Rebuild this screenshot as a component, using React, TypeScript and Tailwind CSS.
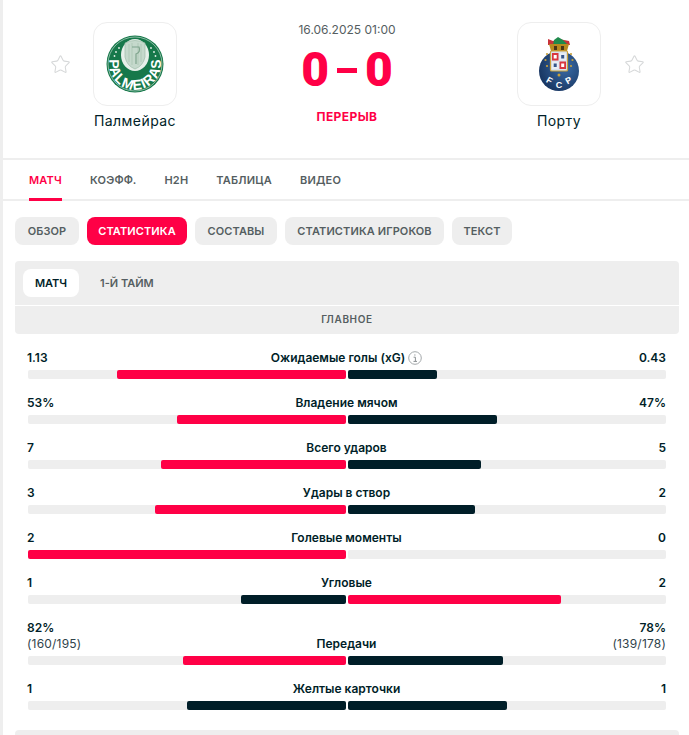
import { Star } from "lucide-react";
import type { ReactNode } from "react";

const TABS = ["МАТЧ", "КОЭФФ.", "H2H", "ТАБЛИЦА", "ВИДЕО"];
const PILLS = [
  { label: "ОБЗОР", width: "w-[64px]" },
  { label: "СТАТИСТИКА", width: "w-[100px]" },
  { label: "СОСТАВЫ", width: "w-[82px]" },
  { label: "СТАТИСТИКА ИГРОКОВ", width: "w-[159px]" },
  { label: "ТЕКСТ", width: "w-[60px]" },
];

interface StatRow {
  label: string;
  home: string;
  away: string;
  homeSub?: string;
  awaySub?: string;
  homePct: number;
  awayPct: number;
  leader: "home" | "away" | "none";
  info?: boolean;
}

const STATS: StatRow[] = [
  { label: "Ожидаемые голы (xG)", home: "1.13", away: "0.43", homePct: 72, awayPct: 28, leader: "home", info: true },
  { label: "Владение мячом", home: "53%", away: "47%", homePct: 53, awayPct: 47, leader: "home" },
  { label: "Всего ударов", home: "7", away: "5", homePct: 58.2, awayPct: 41.8, leader: "home" },
  { label: "Удары в створ", home: "3", away: "2", homePct: 60, awayPct: 40, leader: "home" },
  { label: "Голевые моменты", home: "2", away: "0", homePct: 100, awayPct: 0, leader: "home" },
  { label: "Угловые", home: "1", away: "2", homePct: 33, awayPct: 67, leader: "away" },
  { label: "Передачи", home: "82%", away: "78%", homeSub: "(160/195)", awaySub: "(139/178)", homePct: 51.3, awayPct: 48.7, leader: "home" },
  { label: "Желтые карточки", home: "1", away: "1", homePct: 50, awayPct: 50, leader: "none" },
];

function PalmeirasLogo() {
  return (
    <svg viewBox="0 0 58 58" className="size-[58px]">
      <circle cx="29" cy="29" r="28.5" fill="#16784a" />
      <circle cx="29" cy="29" r="27" fill="none" stroke="#d9e8df" strokeWidth="0.6" />
      {/* shield */}
      <ellipse cx="29" cy="20" rx="14" ry="16" fill="#e6efe9" />
      <path d="M19 8 Q29 3 39 8 L39 22 Q37 31 29 34 Q21 31 19 22 Z" fill="#c5d9cc" stroke="#9dbba9" strokeWidth="0.7" />
      <path d="M23 9 V27 M26 8 V30 M32 8 V30 M35 9 V27" stroke="#a9c5b3" strokeWidth="0.8" />
      <path d="M26 12 H33 Q35 17 30 19 V29" fill="none" stroke="#7fa48d" strokeWidth="1.2" />
      <g fill="#e6efe9">
        <circle cx="10" cy="17" r="0.9" />
        <circle cx="48" cy="17" r="0.9" />
        <circle cx="13" cy="13" r="0.9" />
        <circle cx="45" cy="13" r="0.9" />
        <circle cx="8.5" cy="21" r="0.9" />
        <circle cx="49.5" cy="21" r="0.9" />
      </g>
      <path id="palm-arc" d="M3.5 25 A25.8 25.8 0 1 0 54.5 25" fill="none" />
      <text fontFamily="'Liberation Sans', sans-serif" fontWeight="700" fontSize="14" fill="#fff">
        <textPath href="#palm-arc" startOffset="50%" textAnchor="middle" textLength="90">
          PALMEIRAS
        </textPath>
      </text>
    </svg>
  );
}

function PortoLogo() {
  return (
    <svg viewBox="0 0 40 54" className="h-[54px] w-[40px]">
      <defs>
        <radialGradient id="porto-ball" cx="65%" cy="40%" r="70%">
          <stop offset="0%" stopColor="#3a6ba6" />
          <stop offset="100%" stopColor="#17345f" />
        </radialGradient>
      </defs>
      <circle cx="20" cy="34" r="20" fill="url(#porto-ball)" />
      {/* crown */}
      <path d="M9 2 L14 4 L20 2 L25 3 L30 4 L31 8 L9 8 Z" fill="#c8323a" />
      <path d="M15 3 L19 0 L24 3 L28 7 L22 9 L14 8 Z" fill="#1f8a4c" />
      <path d="M10 7 H30 L28 14 H12 Z" fill="#b8891f" />
      <rect x="15" y="9" width="3" height="4" fill="#4a3515" />
      <rect x="22" y="9" width="3" height="4" fill="#4a3515" />
      {/* shield */}
      <rect x="11.5" y="14" width="17" height="20" rx="1" fill="#d9e3ee" stroke="#c9a13b" strokeWidth="1.2" />
      <rect x="13" y="16" width="6.5" height="7.5" fill="#d9363e" />
      <rect x="20.5" y="16" width="6.5" height="7.5" fill="#e7eef5" />
      <rect x="13" y="24.5" width="6.5" height="7.5" fill="#e7eef5" />
      <rect x="20.5" y="24.5" width="6.5" height="7.5" fill="#d9363e" />
      <rect x="14.7" y="18" width="3" height="3.5" fill="#fff" />
      <rect x="22.2" y="18" width="3" height="3.5" fill="#35568a" />
      <rect x="14.7" y="26.5" width="3" height="3.5" fill="#35568a" />
      <rect x="22.2" y="26.5" width="3" height="3.5" fill="#fff" />
      <g fill="#c9a13b">
        <circle cx="8" cy="17" r="1.1" />
        <circle cx="32" cy="17" r="1.1" />
        <circle cx="6.5" cy="23" r="1.1" />
        <circle cx="33.5" cy="23" r="1.1" />
        <circle cx="8" cy="29" r="1.1" />
        <circle cx="32" cy="29" r="1.1" />
        <circle cx="20" cy="38" r="1.5" />
      </g>
      <g fontFamily="'Liberation Sans', sans-serif" fontWeight="700" fontSize="9" fill="#fff" textAnchor="middle">
        <text x="9" y="46" transform="rotate(30 9 46)">F</text>
        <text x="20" y="51">C</text>
        <text x="31" y="46" transform="rotate(-30 31 46)">P</text>
      </g>
    </svg>
  );
}

function Team({ name, children }: { name: string; children: ReactNode }) {
  return (
    <div className="flex w-[84px] flex-col items-center">
      <div className="flex size-[84px] items-center justify-center rounded-[14px] border border-[#eeeeee] bg-white">
        {children}
      </div>
      <span className="mt-[5px] whitespace-nowrap text-[14px] leading-[20px] tracking-[0.45px] text-[#001e28]">
        {name}
      </span>
    </div>
  );
}

function InfoIcon() {
  return (
    <svg viewBox="0 0 14 14" className="size-[14px]">
      <circle cx="7" cy="7" r="6.3" fill="none" stroke="#a4a9ab" strokeWidth="1" />
      <path d="M5.6 6.2 H7.4 V10.3 M5.5 10.4 H9 M6.9 3.4 V4.6" fill="none" stroke="#8b9193" strokeWidth="1" />
    </svg>
  );
}

function Stat({ stat }: { stat: StatRow }) {
  return (
    <div className="mb-[16px] last:mb-0">
      <div className="flex items-end justify-between text-[12px] leading-[16px] text-[#001e28]">
        <div className="-ml-px w-[100px]">
          <div className="font-semibold">{stat.home}</div>
          {stat.homeSub && <div className="tracking-[0.2px] text-[#30434b]">{stat.homeSub}</div>}
        </div>
        <div className="flex items-center gap-[3px] font-semibold">
          {stat.label}
          {stat.info && <InfoIcon />}
        </div>
        <div className="w-[100px] text-right">
          <div className="font-semibold">{stat.away}</div>
          {stat.awaySub && <div className="tracking-[0.2px] text-[#30434b]">{stat.awaySub}</div>}
        </div>
      </div>
      <div className="mt-[4px] flex gap-[2px]">
        <div className="flex h-[9px] flex-1 justify-end rounded-[2px] bg-[#eeeeee]">
          <div
            className={`rounded-[2px] ${stat.leader === "home" ? "bg-[#ff0046]" : "bg-[#001e28]"}`}
            style={{ width: `${stat.homePct}%` }}
          />
        </div>
        <div className="flex h-[9px] flex-1 rounded-[2px] bg-[#eeeeee]">
          <div
            className={`rounded-[2px] ${stat.leader === "away" ? "bg-[#ff0046]" : "bg-[#001e28]"}`}
            style={{ width: `${stat.awayPct}%` }}
          />
        </div>
      </div>
    </div>
  );
}

export default function App() {
  return (
    <div className="h-[735px] overflow-hidden border-l-[3px] border-[#eeeeee] bg-white font-['Inter','Liberation_Sans',sans-serif]">
      {/* Match header */}
      <header className="flex h-[160px] items-start justify-between border-b-2 border-[#eeeeee] pl-[47px] pr-[44px] pt-[22px]">
        <div className="flex items-start gap-[22px]">
          <Star className="mt-[32px] size-[21px] text-[#d6d8d9]" strokeWidth={1.2} />
          <Team name="Палмейрас">
            <PalmeirasLogo />
          </Team>
        </div>

        <div className="flex flex-col items-center">
          <div className="text-[12px] leading-[16px] text-[#555e61]">16.06.2025 01:00</div>
          <div className="mt-[9px] flex h-[46px] items-center gap-[8px] font-['Roboto',sans-serif] text-[48px] font-black leading-none text-[#ff0046]">
            <span>0</span>
            <span className="h-[5px] w-[20px] bg-[#ff0046]" aria-hidden />
            <span>0</span>
          </div>
          <div className="mt-[16px] text-[12px] font-bold leading-[16px] tracking-[0.4px] text-[#ff0046]">ПЕРЕРЫВ</div>
        </div>

        <div className="flex items-start gap-[23px]">
          <Team name="Порту">
            <PortoLogo />
          </Team>
          <Star className="mt-[32px] size-[21px] text-[#d6d8d9]" strokeWidth={1.2} />
        </div>
      </header>

      {/* Main tabs */}
      <nav className="flex h-[41px] gap-[28px] border-b-2 border-[#eeeeee] pl-[26px]">
        {TABS.map((tab, i) => (
          <div
            key={tab}
            className={`flex h-[41px] items-center border-b-[3px] pt-[2px] text-[11px] font-semibold tracking-[0.2px] ${
              i === 0 ? "border-[#ff0046] text-[#ff0046]" : "border-transparent text-[#555e61]"
            }`}
          >
            {tab}
          </div>
        ))}
      </nav>

      {/* Section pills */}
      <div className="mt-[16px] flex gap-[8px] pl-[12px]">
        {PILLS.map((pill, i) => (
          <div
            key={pill.label}
            className={`flex h-[28px] items-center justify-center rounded-[8px] text-[11px] font-semibold tracking-[0.1px] ${pill.width} ${
              i === 1 ? "bg-[#ff0046] text-white" : "bg-[#eeeeee] text-[#555e61]"
            }`}
          >
            {pill.label}
          </div>
        ))}
      </div>

      {/* Period switch */}
      <div className="ml-[12px] mt-[16px] flex h-[44px] w-[664px] items-center gap-[8px] rounded-t-[4px] bg-[#eeeeee] px-[8px]">
        <div className="flex h-[28px] w-[56px] items-center justify-center rounded-[8px] bg-white text-[11px] font-semibold text-[#001e28]">
          МАТЧ
        </div>
        <div className="flex h-[28px] items-center px-[13px] text-[11px] font-semibold text-[#555e61]">
          1-Й ТАЙМ
        </div>
      </div>
      <div className="ml-[12px] mt-[1px] flex h-[28px] w-[664px] items-center justify-center rounded-b-[4px] bg-[#eeeeee] pb-px text-[10px] font-semibold tracking-[0.65px] text-[#555e61]">
        ГЛАВНОЕ
      </div>

      {/* Stats */}
      <div className="ml-[25px] mt-[16px] w-[638px]">
        {STATS.map((stat) => (
          <Stat key={stat.label} stat={stat} />
        ))}
      </div>

      <div className="ml-[12px] mt-[20px] h-[20px] w-[664px] rounded-t-[4px] bg-[#eeeeee]" />
    </div>
  );
}
